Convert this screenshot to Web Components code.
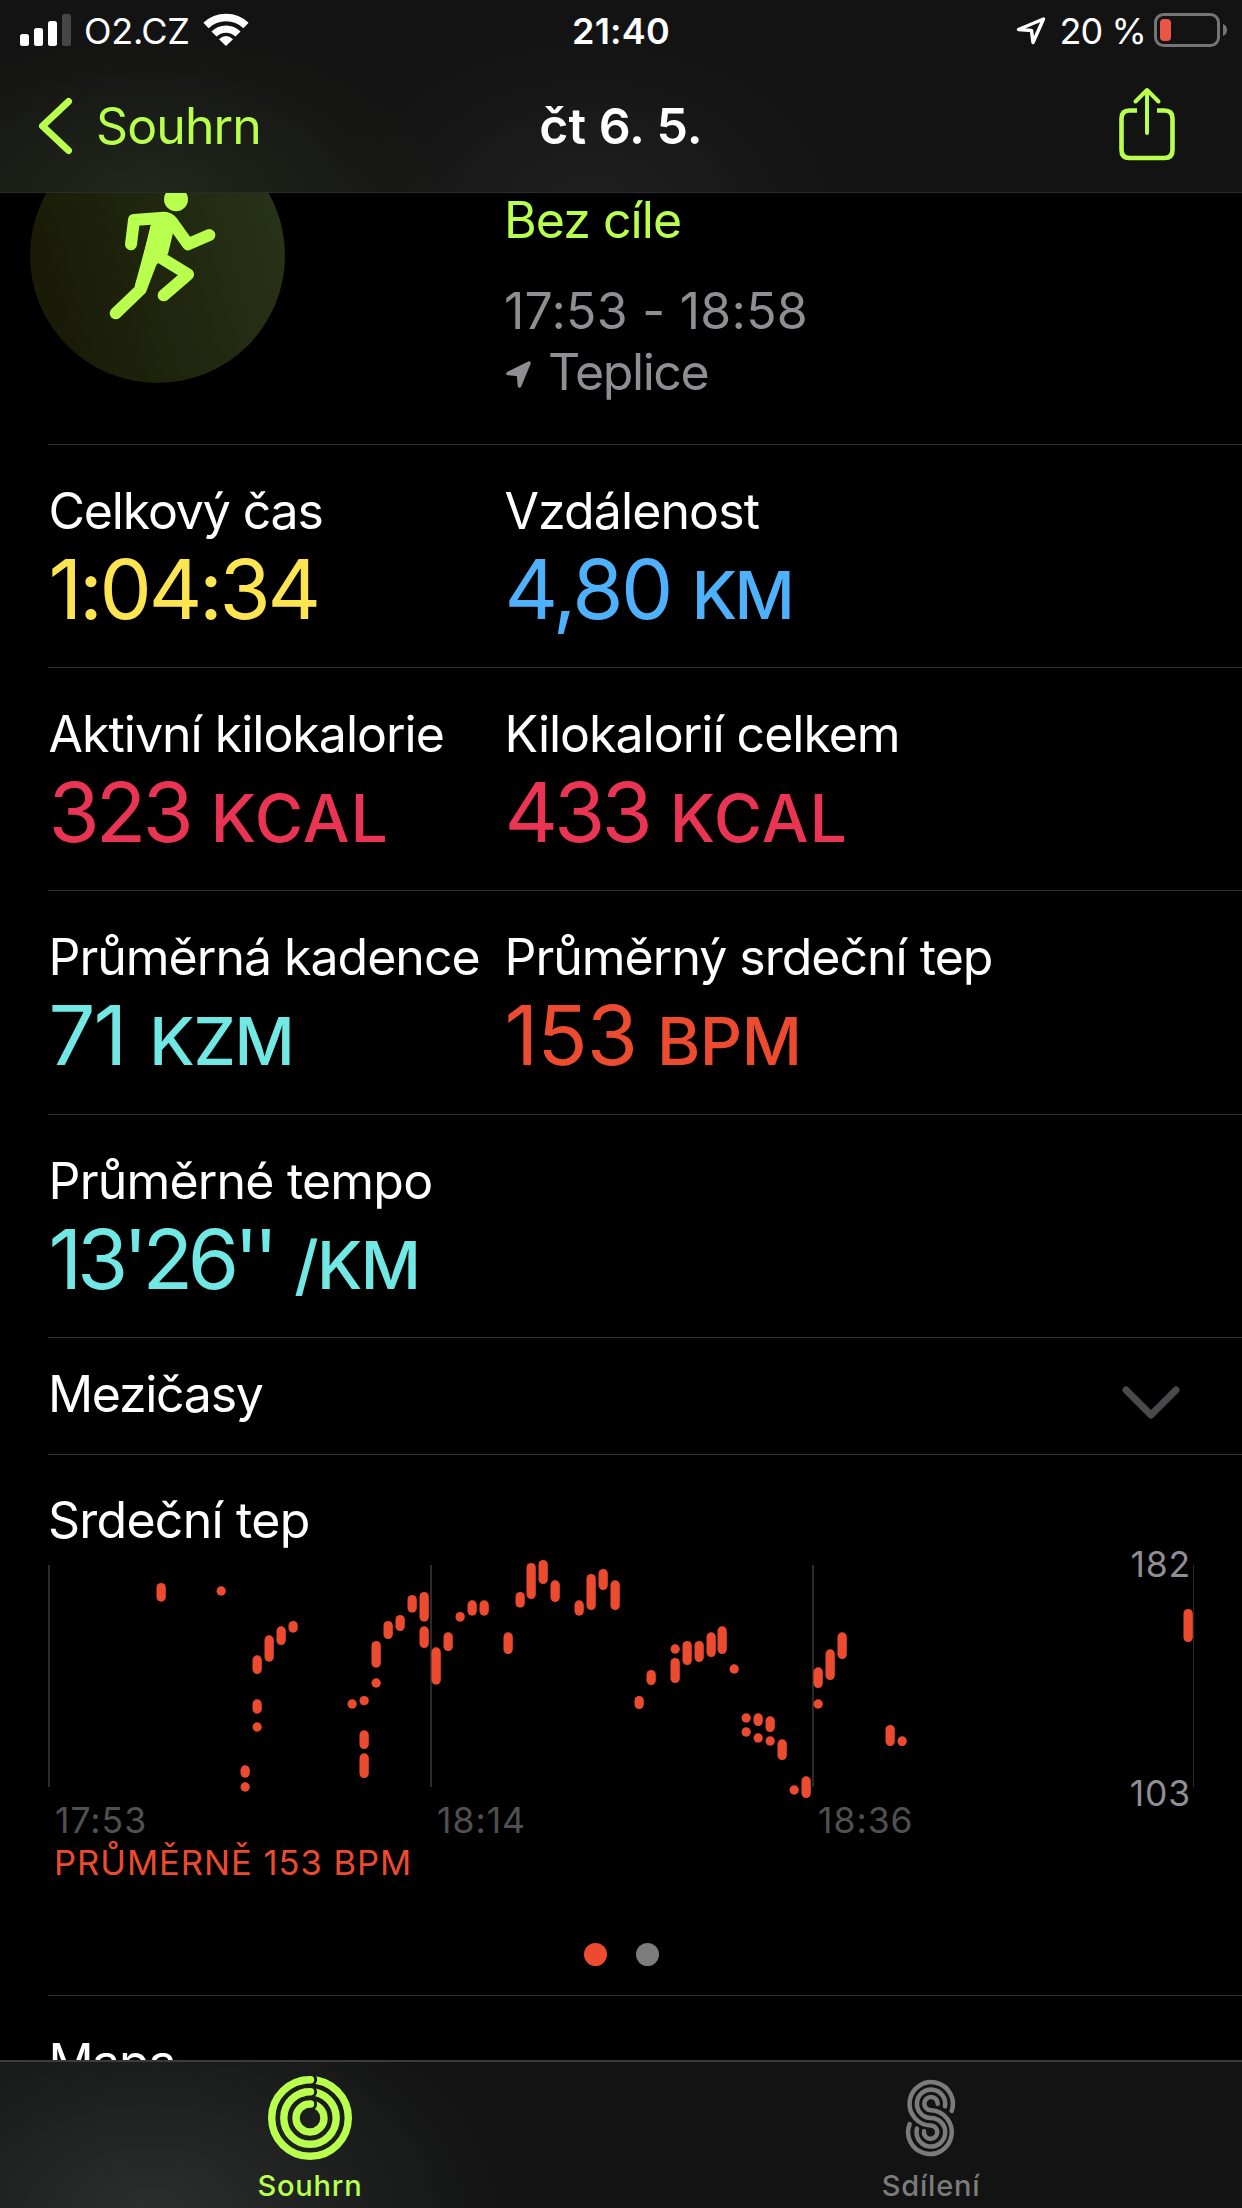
<!DOCTYPE html>
<html lang="cs">
<head>
<meta charset="utf-8">
<title>Souhrn</title>
<style>
    body {
        margin: 0;
        background: #000;
        color: #fff;
        font-family: Inter, "Liberation Sans", sans-serif;
        font-size: 50px;
        line-height: 60px;
        --accent: #b9ff4d;
        --line: #303032;
        --gray: #8e8e93;
        --heart: #ec4b2f;
    }
</style>
</head>
<body>
<workout-app>
    <status-bar slot="top" carrier="O2.CZ" time="21:40" battery="20 %"></status-bar>
    <nav-bar slot="top" back="Souhrn">čt 6. 5.</nav-bar>

    <workout-hero goal="Bez cíle" time="17:53 - 18:58" place="Teplice"></workout-hero>
    <metric-row>
        <metric-item label="Celkový čas" value="1:04:34" color="#fde552" track="-3.3" label-track="-1.15"></metric-item>
        <metric-item label="Vzdálenost" value="4,80" unit="KM" color="#4fb1fb" track="-2.6" unit-track="-2.5" label-track="-0.9"></metric-item>
    </metric-row>
    <metric-row>
        <metric-item label="Aktivní kilokalorie" value="323" unit="KCAL" color="#e93454" track="-4" unit-track="1"></metric-item>
        <metric-item label="Kilokalorií celkem" value="433" unit="KCAL" color="#e93454" track="-4" unit-track="1"></metric-item>
    </metric-row>
    <metric-row style="height: 223px">
        <metric-item label="Průměrná kadence" value="71" unit="KZM" color="#72e8e4" track="-2" unit-track="-1.2" unit-gap="24"></metric-item>
        <metric-item label="Průměrný srdeční tep" value="153" unit="BPM" color="#ec4b2f" track="-1" unit-track="-0.5" unit-gap="20"></metric-item>
    </metric-row>
    <metric-row>
        <metric-item label="Průměrné tempo" value="13'26''" unit="/KM" color="#72e8e4" track="-5.3" unit-track="-1.6" label-track="-0.8"></metric-item>
    </metric-row>
    <splits-row>Mezičasy</splits-row>
    <heart-chart label="Srdeční tep" max="182" min="103" average="PRŮMĚRNĚ 153 BPM"></heart-chart>
    <metric-row>
        <metric-item label="Mapa" label-track="-1.4"></metric-item>
    </metric-row>

    <tab-bar slot="bottom">
        <tab-item icon="rings" active>Souhrn</tab-item>
        <tab-item icon="sharing">Sdílení</tab-item>
    </tab-bar>
</workout-app>

<script>
class WorkoutApp extends HTMLElement {
    constructor() {
        super();
        this.attachShadow({mode: 'open'});
        this.shadowRoot.innerHTML = `
            <style>
                :host {
                    display: flex;
                    flex-direction: column;
                    width: 1242px;
                    height: 2208px;
                    overflow: hidden;
                }
                header {
                    height: 192px;
                    flex: none;
                    border-bottom: 1px solid #2b2b2b;
                    background:
                        radial-gradient(300px 170px at 150px 200px, #23271c, transparent),
                        radial-gradient(260px 180px at 590px 210px, #202020, transparent),
                        #131313;
                }
                main {
                    flex: 1;
                    min-height: 0;
                    overflow: hidden;
                }
            </style>
            <header><slot name="top"></slot></header>
            <main><slot></slot></main>
            <slot name="bottom"></slot>
        `;
    }
}

class StatusBar extends HTMLElement {
    constructor() {
        super();
        this.attachShadow({mode: 'open'});
        this.shadowRoot.innerHTML = `
            <style>
                :host {
                    display: grid;
                    grid-template-columns: 1fr auto 1fr;
                    height: 62px;
                    font-size: 36px;
                    line-height: 62px;
                }
                div {
                    display: flex;
                }
                .left {
                    padding-left: 20px;
                }
                .right {
                    justify-content: flex-end;
                    padding-right: 14px;
                }
                .carrier {
                    margin-left: 13px;
                    width: 119px;
                    letter-spacing: -0.3px;
                }
                .time {
                    font-weight: 600;
                    letter-spacing: 0.2px;
                }
                .battery {
                    margin: 0 8px 0 13px;
                    letter-spacing: -0.9px;
                }
                svg {
                    display: block;
                    flex: none;
                }
            </style>
            <div class="left">
                <svg width="51" height="62" fill="#fff">
                    <rect x="0" y="34" width="9" height="12" rx="2.5"/>
                    <rect x="14" y="28" width="9" height="18" rx="2.5"/>
                    <rect x="28" y="21" width="9" height="25" rx="2.5"/>
                    <rect x="42" y="14" width="9" height="32" rx="2.5" fill="#464646"/>
                </svg>
                <span class="carrier"></span>
                <svg width="46" height="62" fill="none" stroke="#fff">
                    <path d="M3 25.5A29 29 0 0 1 43 25.5" stroke-width="7.6"/>
                    <path d="M11 34A17 17 0 0 1 35 34" stroke-width="7.2"/>
                    <path d="M23 46L16 39.2Q23 33 30 39.2Z" fill="#fff" stroke="none"/>
                </svg>
            </div>
            <span class="time"></span>
            <div class="right">
                <svg width="30" height="62">
                    <path d="M2.5 29.5L27.5 19L17 42.500L15.500 30.500Z" fill="none" stroke="#fff" stroke-width="3.4" stroke-linejoin="round"/>
                </svg>
                <span class="battery"></span>
                <svg width="74" height="62">
                    <rect x="1.500" y="14.500" width="63" height="31" rx="8" fill="none" stroke="#757575" stroke-width="3"/>
                    <rect x="6" y="19" width="11" height="22" rx="4" fill="#ec5545"/>
                    <path d="M69 24Q73 25.500 73 30T69 36Z" fill="#757575"/>
                </svg>
            </div>
        `;
    }

    connectedCallback() {
        this.shadowRoot.querySelector('.carrier').textContent = this.getAttribute('carrier');
        this.shadowRoot.querySelector('.time').textContent = this.getAttribute('time');
        this.shadowRoot.querySelector('.battery').textContent = this.getAttribute('battery');
    }
}

class NavBar extends HTMLElement {
    constructor() {
        super();
        this.attachShadow({mode: 'open'});
        this.shadowRoot.innerHTML = `
            <style>
                :host {
                    display: grid;
                    grid-template-columns: 1fr auto 1fr;
                    height: 130px;
                    line-height: 128px;
                    color: var(--accent);
                }
                div {
                    display: flex;
                    padding-left: 36px;
                }
                .back {
                    margin-left: 20px;
                    letter-spacing: -0.9px;
                }
                .title {
                    color: #fff;
                    font-weight: 600;
                    letter-spacing: 0;
                }
                .share {
                    justify-content: flex-end;
                    padding-right: 65px;
                }
                svg {
                    display: block;
                    fill: none;
                    stroke: currentColor;
                    stroke-linecap: round;
                    stroke-linejoin: round;
                }
            </style>
            <div>
                <svg width="40" height="130"><path d="M32.500 39.500L6.500 64L32.500 88.500" stroke-width="7"/></svg>
                <span class="back"></span>
            </div>
            <span class="title"><slot></slot></span>
            <div class="share">
                <svg width="62" height="130" stroke-width="4.600">
                    <path d="M22 48.500H14.500Q6.500 48.500 6.500 56.500V88Q6.500 96 14.500 96H49.500Q57.500 96 57.500 88V56.500Q57.500 48.500 49.500 48.500H42" stroke-linecap="butt"/>
                    <path d="M32 71V30M20.500 39.500L32 28L43.500 39.500" stroke-width="4"/>
                </svg>
            </div>
        `;
    }

    connectedCallback() {
        this.shadowRoot.querySelector('.back').textContent = this.getAttribute('back');
    }
}

class WorkoutHero extends HTMLElement {
    constructor() {
        super();
        this.attachShadow({mode: 'open'});
        this.shadowRoot.innerHTML = `
            <style>
                :host {
                    display: grid;
                    grid-template-columns: 474px 1fr;
                    height: 251px;
                    padding-left: 30px;
                    box-sizing: border-box;
                    color: var(--gray);
                }
                .badge {
                    width: 255px;
                    height: 255px;
                    margin-top: -65px;
                    border-radius: 50%;
                    background: linear-gradient(75deg, #191b06 15%, #283218 90%);
                }
                .text {
                    margin-top: -3px;
                }
                .goal {
                    color: var(--accent);
                    margin-bottom: 31px;
                    letter-spacing: -0.95px;
                }
                .time {
                    letter-spacing: 0.25px;
                }
                .place {
                    display: flex;
                    margin-top: 1px;
                    letter-spacing: -1.4px;
                }
                .place svg {
                    margin: 19px 16px 0 2px;
                }
                svg {
                    display: block;
                    flex: none;
                }
            </style>
            <div class="badge">
                <svg width="255" height="255" viewBox="90 -157 765 765" fill="none" stroke="#b9ff4d" stroke-width="36" stroke-linecap="round" stroke-linejoin="round">
                    <circle cx="528" cy="57" r="36" fill="#b9ff4d" stroke="none"/>
                    <path d="M393 192L402 119L492 112Q508 112 518 127L564 192L628 164"/>
                    <path d="M475 115L438 270L420 329L347 399M487 235L564 282L491 345"/>
                    <path d="M455 130L495 96L530 120L519 158L504 220L469 254L437 338L404 318Z" fill="#b9ff4d" stroke="none"/>
                </svg>
            </div>
            <div class="text">
                <div class="goal"></div>
                <div class="time"></div>
                <div class="place">
                    <svg width="26" height="28"><path d="M2 12.500L23 2L13.500 25L12.500 13.500Z" fill="#8e8e93" stroke="#8e8e93" stroke-width="3.5" stroke-linejoin="round"/></svg>
                    <span></span>
                </div>
            </div>
        `;
    }

    connectedCallback() {
        this.shadowRoot.querySelector('.goal').textContent = this.getAttribute('goal');
        this.shadowRoot.querySelector('.time').textContent = this.getAttribute('time');
        this.shadowRoot.querySelector('.place span').textContent = this.getAttribute('place');
    }
}

class MetricRow extends HTMLElement {
    constructor() {
        super();
        this.attachShadow({mode: 'open'});
        this.shadowRoot.innerHTML = `
            <style>
                :host {
                    display: grid;
                    grid-template-columns: 456px 1fr;
                    height: 222px;
                    margin-left: 48px;
                    border-top: 1px solid var(--line);
                }
            </style>
            <slot></slot>
        `;
    }
}

class MetricItem extends HTMLElement {
    constructor() {
        super();
        this.attachShadow({mode: 'open'});
        this.shadowRoot.innerHTML = `
            <style>
                :host {
                    display: block;
                    padding: 36px 0 0 0.5px;
                    white-space: nowrap;
                }
                .label {
                    letter-spacing: -1px;
                }
                .value {
                    margin-top: 3px;
                    font-size: 83px;
                    line-height: 90px;
                }
                .unit {
                    font-size: 66px;
                    letter-spacing: 0;
                    font-weight: 500;
                    margin-left: 21px;
                }
            </style>
            <div class="label"></div>
            <div class="value"><span class="number"></span><span class="unit"></span></div>
        `;
    }

    connectedCallback() {
        const label = this.shadowRoot.querySelector('.label');
        const value = this.shadowRoot.querySelector('.value');
        const number = this.shadowRoot.querySelector('.number');
        const unit = this.shadowRoot.querySelector('.unit');
        label.textContent = this.getAttribute('label');
        number.textContent = this.getAttribute('value');
        unit.textContent = this.getAttribute('unit');
        value.style.color = this.getAttribute('color');
        // Letter spacing can be set for each part
        this._track(label, 'label-track');
        this._track(number, 'track');
        this._track(unit, 'unit-track');
        if (this.hasAttribute('unit-gap')) {
            unit.style.marginLeft = this.getAttribute('unit-gap') + 'px';
        }
    }

    _track(element, name) {
        if (this.hasAttribute(name)) {
            element.style.letterSpacing = this.getAttribute(name) + 'px';
        }
    }
}

class SplitsRow extends HTMLElement {
    constructor() {
        super();
        this.attachShadow({mode: 'open'});
        this.shadowRoot.innerHTML = `
            <style>
                :host {
                    display: flex;
                    justify-content: space-between;
                    height: 117px;
                    margin-left: 48px;
                    padding: 26px 60px 0 0;
                    box-sizing: border-box;
                    border-top: 1px solid var(--line);
                    letter-spacing: -1.3px;
                }
                svg {
                    display: block;
                    margin-top: 20px;
                }
            </style>
            <slot></slot>
            <svg width="62" height="40"><path d="M6 6L31 31L56 6" fill="none" stroke="#4a4a4c" stroke-width="7" stroke-linecap="round" stroke-linejoin="round"/></svg>
        `;
    }
}

// x, then top / bottom pairs, in plot pixels
const heartMarks = [
    [113, 33, 51.7], [173, 36.3, 45.7],
    [197, 215.3, 227.7, 232.3, 241.7],
    [209, 105.3, 124, 149.3, 163.7, 172.3, 181.7],
    [221, 85.3, 111.7], [233, 76.3, 95], [245, 71, 82.7],
    [304, 149.3, 158.7],
    [316, 146, 155.3, 180.3, 199, 203.3, 228],
    [328, 91, 117.7, 128.3, 137.7],
    [340, 71, 89], [352, 65, 81], [364, 45, 62.7],
    [376, 42, 71.7, 76.3, 98],
    [388, 97.3, 134.7], [400, 82.3, 101], [412, 62, 71.7],
    [424, 50.3, 65.7], [436, 50.3, 65.7], [460, 82.3, 104],
    [472, 42, 57.7], [483, 13, 49], [495, 10, 34], [507, 30.3, 52],
    [531, 50.3, 65.7], [543, 24, 60], [555, 19, 40], [567, 30.3, 60],
    [591, 146, 159], [603, 120, 135],
    [627, 94.3, 103.7, 108, 133],
    [639, 91, 115], [651, 91, 112], [663, 82.3, 107], [674, 76.3, 104],
    [686, 114.3, 123.7],
    [698, 163.3, 172.7, 177.3, 186.7],
    [710, 163.3, 176, 183.3, 192.7],
    [722, 166.3, 182, 186.3, 195.7],
    [734, 189.3, 210], [746, 235.3, 244.7], [758, 226.3, 248],
    [770, 117.3, 138, 149.3, 158.7],
    [782, 99.3, 130], [794, 82.3, 109],
    [842, 175, 196], [854, 186.3, 196],
    [1140, 59, 92]
];

class HeartChart extends HTMLElement {
    constructor() {
        super();
        this.attachShadow({mode: 'open'});
        this.shadowRoot.innerHTML = `
            <style>
                :host {
                    display: block;
                    height: 541px;
                    margin-left: 48px;
                    padding-top: 35px;
                    box-sizing: border-box;
                    border-top: 1px solid var(--line);
                }
                .label {
                    letter-spacing: -0.75px;
                }
                .plot {
                    position: relative;
                    width: 1146px;
                    height: 250px;
                }
                svg {
                    display: block;
                    overflow: visible;
                }
                .range {
                    position: absolute;
                    right: 3px;
                    top: -6px;
                    height: 271px;
                    display: flex;
                    flex-direction: column;
                    justify-content: space-between;
                    color: var(--gray);
                    text-align: right;
                    letter-spacing: 0.8px;
                }
                .range, .times, .average {
                    font-size: 35.5px;
                    line-height: 42px;
                }
                .times {
                    display: grid;
                    grid-template-columns: 382px 381px 1fr;
                    padding-left: 7px;
                    color: #505052;
                    letter-spacing: 1px;
                }
                .average {
                    padding-left: 6px;
                    color: var(--heart);
                    font-size: 34.5px;
                    letter-spacing: 1px;
                }
                .pager {
                    display: flex;
                    justify-content: center;
                    gap: 29px;
                    margin: 59px 48px 0 0;
                }
                .pager i {
                    width: 23px;
                    height: 23px;
                    border-radius: 50%;
                    background: #7c7c7c;
                }
                .pager .on {
                    background: var(--heart);
                }
            </style>
            <div class="label"></div>
            <div class="plot">
                <svg width="1146" height="250"></svg>
                <div class="range"><span class="max"></span><span class="min"></span></div>
            </div>
            <div class="times"><span>17:53</span><span>18:14</span><span>18:36</span></div>
            <div class="average"></div>
            <div class="pager"><i class="on"></i><i></i></div>
        `;
    }

    connectedCallback() {
        for (const name of ['label', 'max', 'min', 'average']) {
            this.shadowRoot.querySelector('.' + name).textContent = this.getAttribute(name);
        }
        this._drawPlot();
    }

    _drawPlot() {
        let shapes = '';
        for (const [x, width] of [[0, 2], [382, 2], [764, 2], [1145, 1]]) {
            shapes += `<rect x="${x}" y="15" width="${width}" height="222" fill="#2a2a2c"/>`;
        }
        for (const [x, ...ends] of heartMarks) {
            for (let i = 0; i < ends.length; i += 2) {
                shapes += `<rect x="${x - 4.5}" y="${ends[i]}" width="9.3" height="${ends[i + 1] - ends[i]}" rx="4.65" fill="#ec4b2f"/>`;
            }
        }
        this.shadowRoot.querySelector('svg').innerHTML = shapes;
    }
}

class TabBar extends HTMLElement {
    constructor() {
        super();
        this.attachShadow({mode: 'open'});
        this.shadowRoot.innerHTML = `
            <style>
                :host {
                    display: grid;
                    grid-template-columns: 1fr 1fr;
                    flex: none;
                    height: 148px;
                    box-sizing: border-box;
                    border-top: 2px solid #3c3c3c;
                    background: radial-gradient(360px 230px at 150px 150px, #2b2f2e, transparent) #131313;
                }
            </style>
            <slot></slot>
        `;
    }
}

const tabIcons = {
    rings: `
        <svg width="84" height="84" viewBox="-42 -42 84 84" fill="none" stroke="currentColor" stroke-width="7.4">
            <mask id="gap" maskUnits="userSpaceOnUse" x="-42" y="-42" width="84" height="84">
                <rect x="-42" y="-42" width="84" height="84" fill="#fff" stroke="none"/>
                <g fill="#000" stroke="none">
                    <circle cx="0.5" cy="-38.3" r="6.600"/>
                    <circle cx="0.5" cy="-26.200" r="6.600"/>
                    <circle cx="0.5" cy="-14" r="6.600"/>
                </g>
            </mask>
            <g mask="url(#gap)">
                <circle r="38.300"/>
                <circle r="26.200"/>
                <circle r="14"/>
            </g>
            <g stroke-linecap="round">
                <path d="M-10 -37A38.3 38.3 0 0 1 0.500 -38.3"/>
                <path d="M-8 -24.950A26.200 26.200 0 0 1 0.500 -26.200"/>
                <path d="M-7 -12.120A14 14 0 0 1 0.500 -14"/>
            </g>
        </svg>`,
    sharing: `
        <svg width="84" height="84" viewBox="147 109 252 252" fill="none" stroke="currentColor" stroke-width="13.500" stroke-linecap="round">
            <path d="M335 214A65 65 0 1 0 273 257.500A20 20 0 1 1 252 275"/>
            <path d="M315 200A42.500 42.500 0 1 0 273 234.750A43 43 0 1 1 231 267"/>
            <path d="M293 192A20 20 0 1 0 273 212A65.500 65.500 0 1 1 209 253"/>
        </svg>`
};

class TabItem extends HTMLElement {
    constructor() {
        super();
        this.attachShadow({mode: 'open'});
        this.shadowRoot.innerHTML = `
            <style>
                :host {
                    display: flex;
                    flex-direction: column;
                    align-items: center;
                    padding: 14px 1px 0 0;
                    color: #7b7b7b;
                    font-size: 29px;
                    line-height: 36px;
                    font-weight: 500;
                    letter-spacing: 0.8px;
                }
                :host([active]) {
                    color: var(--accent);
                }
                svg {
                    display: block;
                }
                span {
                    margin-top: 8px;
                }
            </style>
            ${tabIcons[this.getAttribute('icon')]}
            <span><slot></slot></span>
        `;
    }
}

customElements.define('workout-app', WorkoutApp);
customElements.define('status-bar', StatusBar);
customElements.define('nav-bar', NavBar);
customElements.define('workout-hero', WorkoutHero);
customElements.define('metric-row', MetricRow);
customElements.define('metric-item', MetricItem);
customElements.define('splits-row', SplitsRow);
customElements.define('heart-chart', HeartChart);
customElements.define('tab-bar', TabBar);
customElements.define('tab-item', TabItem);
</script>
</body>
</html>
